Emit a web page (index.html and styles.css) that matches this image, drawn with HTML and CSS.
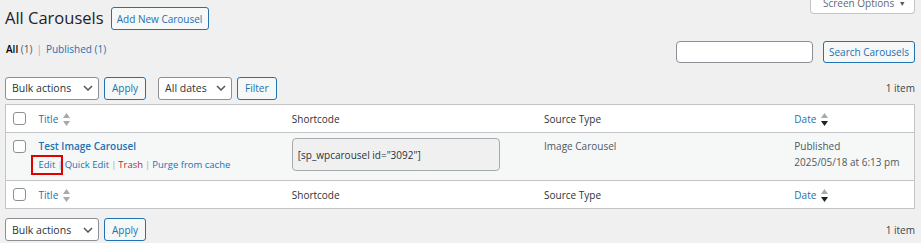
FILE: index.html
```html
<!DOCTYPE html>
<html lang="en">
<head>
<meta charset="utf-8">
<title>All Carousels</title>
<link rel="stylesheet" href="styles.css">
</head>
<body>
<div class="wrap">
  <div class="topbar">
    <h1 class="page-title">All Carousels</h1>
    <a class="btn add-new" href="#">Add New Carousel</a>
    <div class="screen-tab">Screen Options <span class="caret">&#9660;</span></div>
  </div>

  <div class="views-row">
    <ul class="subsubsub">
      <li class="current">All <span class="count">(1)</span></li>
      <li class="sep">|</li>
      <li><a href="#">Published <span class="count">(1)</span></a></li>
    </ul>
    <div class="search-box">
      <input class="search-input" type="search" aria-label="Search">
      <button class="btn">Search Carousels</button>
    </div>
  </div>

  <div class="tablenav">
    <div class="actions">
      <div class="select bulk">Bulk actions
        <svg class="chev" viewBox="0 0 10 6" width="10" height="6"><path d="M1 1l4 4 4-4" fill="none" stroke="#50575e" stroke-width="1.5"/></svg>
      </div>
      <button class="btn">Apply</button>
    </div>
    <div class="actions">
      <div class="select dates">All dates
        <svg class="chev" viewBox="0 0 10 6" width="10" height="6"><path d="M1 1l4 4 4-4" fill="none" stroke="#50575e" stroke-width="1.5"/></svg>
      </div>
      <button class="btn">Filter</button>
    </div>
    <div class="items">1 item</div>
  </div>

  <table class="list">
    <colgroup>
      <col class="c-cb"><col class="c-title"><col class="c-code"><col class="c-src"><col class="c-date">
    </colgroup>
    <thead>
      <tr>
        <th class="cb"><span class="check"></span></th>
        <th><a class="sort" href="#">Title <svg class="sorti" viewBox="0 0 7 13" width="7" height="13"><path d="M3.5 0L7 5H0z" fill="#a7aaad"/><path d="M0 8h7l-3.5 5z" fill="#a7aaad"/></svg></a></th>
        <th>Shortcode</th>
        <th>Source Type</th>
        <th><a class="sort" href="#">Date <svg class="sorti" viewBox="0 0 7 13" width="7" height="13"><path d="M3.5 0L7 5H0z" fill="#a7aaad"/><path d="M0 8h7l-3.5 5z" fill="#1d2327"/></svg></a></th>
      </tr>
    </thead>
    <tbody>
      <tr class="alt">
        <td class="cb"><span class="check"></span></td>
        <td>
          <a class="row-title" href="#">Test Image Carousel</a>
          <div class="row-actions">
            <a class="edit-link" href="#">Edit</a><span class="pipe">|</span><a href="#">Quick Edit</a><span class="pipe">|</span><a class="trash" href="#">Trash</a><span class="pipe">|</span><a href="#">Purge from cache</a>
          </div>
        </td>
        <td><div class="code-box">[sp_wpcarousel id="3092"]</div></td>
        <td class="muted">Image Carousel</td>
        <td class="muted">Published<br>2025/05/18 at 6:13 pm</td>
      </tr>
    </tbody>
    <tfoot>
      <tr>
        <th class="cb"><span class="check"></span></th>
        <th><a class="sort" href="#">Title <svg class="sorti" viewBox="0 0 7 13" width="7" height="13"><path d="M3.5 0L7 5H0z" fill="#a7aaad"/><path d="M0 8h7l-3.5 5z" fill="#a7aaad"/></svg></a></th>
        <th>Shortcode</th>
        <th>Source Type</th>
        <th><a class="sort" href="#">Date <svg class="sorti" viewBox="0 0 7 13" width="7" height="13"><path d="M3.5 0L7 5H0z" fill="#a7aaad"/><path d="M0 8h7l-3.5 5z" fill="#1d2327"/></svg></a></th>
      </tr>
    </tfoot>
  </table>

  <div class="tablenav bottom">
    <div class="actions">
      <div class="select bulk">Bulk actions
        <svg class="chev" viewBox="0 0 10 6" width="10" height="6"><path d="M1 1l4 4 4-4" fill="none" stroke="#50575e" stroke-width="1.5"/></svg>
      </div>
      <button class="btn">Apply</button>
    </div>
    <div class="items">1 item</div>
  </div>
</div>
</body>
</html>
```

FILE: styles.css
```css
* { box-sizing: border-box; }
html, body { margin: 0; padding: 0; }
body {
  background: #f0f0f1;
  color: #3c434a;
  font-family: "Open Sans", "Noto Sans", "Liberation Sans", sans-serif;
  font-size: 10px;
  line-height: 16px;
  overflow: hidden;
}
a { color: #2271b1; text-decoration: none; }
.wrap { padding: 0 6px 0 5px; }

.topbar {
  display: flex;
  align-items: flex-start;
  height: 34px;
}
.page-title {
  margin: 6px 7px 0 0;
  font-size: 16.5px;
  font-weight: 400;
  line-height: 24px;
  color: #1d2327;
}
.btn {
  display: inline-flex;
  align-items: center;
  justify-content: center;
  font-family: inherit;
  font-size: 10px;
  color: #2271b1;
  background: #f6f7f7;
  border: 1px solid #2271b1;
  border-radius: 3px;
  height: 23px;
  padding: 0 7px;
  cursor: pointer;
  white-space: nowrap;
}
.add-new { margin-top: 7px; width: 98px; padding: 0; }
.screen-tab {
  margin-left: auto;
  margin-top: -7px;
  height: 21px;
  padding: 2px 0 0 12px;
  background: #fff;
  border: 1px solid #c3c4c7;
  border-top: none;
  border-radius: 0 0 4px 4px;
  color: #646970;
  font-size: 10px;
  width: 105px;
  white-space: nowrap;
}
.caret { font-size: 7px; margin-left: 2px; color: #50575e; vertical-align: 1px; }

.views-row {
  display: flex;
  justify-content: space-between;
  align-items: flex-start;
  height: 40px;
  padding-top: 7px;
}
.subsubsub {
  list-style: none;
  margin: 0;
  padding: 0 0 0 1px;
  display: flex;
  gap: 4px;
  color: #646970;
}
.subsubsub .current { color: #000; font-weight: 600; }
.subsubsub .current .count { font-weight: 400; color: #50575e; }
.subsubsub .sep { color: #a7aaad; }
.search-box { display: flex; gap: 10px; }
.search-input {
  width: 137px;
  height: 22px;
  border: 1px solid #8c8f94;
  border-radius: 4px;
  background: #fff;
  margin: 0;
}
.search-box .btn { height: 22px; width: 92px; padding: 0; }

.tablenav {
  display: flex;
  align-items: center;
  gap: 12px;
  height: 30px;
  padding-bottom: 2px;
}
.tablenav.bottom { height: 32px; padding-top: 9px; padding-bottom: 0; }
.actions { display: flex; gap: 5px; }
.select {
  height: 23px;
  display: flex;
  align-items: center;
  justify-content: space-between;
  border: 1px solid #8c8f94;
  border-radius: 3px;
  background: #fff;
  color: #2c3338;
  font-size: 10.5px;
  padding: 0 5px 0 6px;
}
.select.bulk { width: 94px; }
.select.dates { width: 74px; }
.chev { display: block; }
.tablenav .btn { height: 23px; }
.items { margin-left: auto; color: #3c434a; }

.list {
  width: 910px;
  border: 1px solid #c3c4c7;
  border-collapse: collapse;
  table-layout: fixed;
  background: #fff;
}
.c-cb { width: 23px; }
.c-title { width: 253px; }
.c-code { width: 252px; }
.c-src { width: 250px; }
.c-date { width: 130px; }
th {
  text-align: left;
  font-weight: 400;
  color: #2c3338;
  padding: 6px 10px 5px;
  vertical-align: middle;
}
thead th { border-bottom: 1px solid #c3c4c7; }
tfoot th { border-top: 1px solid #c3c4c7; }
th.cb, td.cb { padding: 0 0 0 7px; }
td.cb { vertical-align: top; padding-top: 7px; }
.check {
  display: block;
  width: 13px;
  height: 13px;
  border: 1px solid #8c8f94;
  border-radius: 3px;
  background: #fff;
}
.sort { display: inline-flex; align-items: center; gap: 5px; }
.sorti { display: block; }
tr.alt { background: #f6f7f7; }
td {
  vertical-align: top;
  padding: 5px 10px 7px;
  color: #50575e;
}
.row-title { font-weight: 600; font-size: 10px; }
.row-actions { padding-top: 3px; color: #a7aaad; font-size: 9.5px; }
.pipe { margin: 0 2px; color: #a7aaad; }
.trash { color: #b32d2e; }
.edit-link { position: relative; }
.edit-link::after {
  content: "";
  position: absolute;
  left: -8px;
  right: -8px;
  top: -3px;
  bottom: -4px;
  border: 2px solid #e00000;
}
.code-box {
  width: 208px;
  height: 33px;
  background: #f0f0f1;
  border: 1px solid #a7aaad;
  border-radius: 4px;
  color: #2c3338;
  display: flex;
  align-items: center;
  padding: 0 0 0 5px;
}
.muted { color: #50575e; }
```
